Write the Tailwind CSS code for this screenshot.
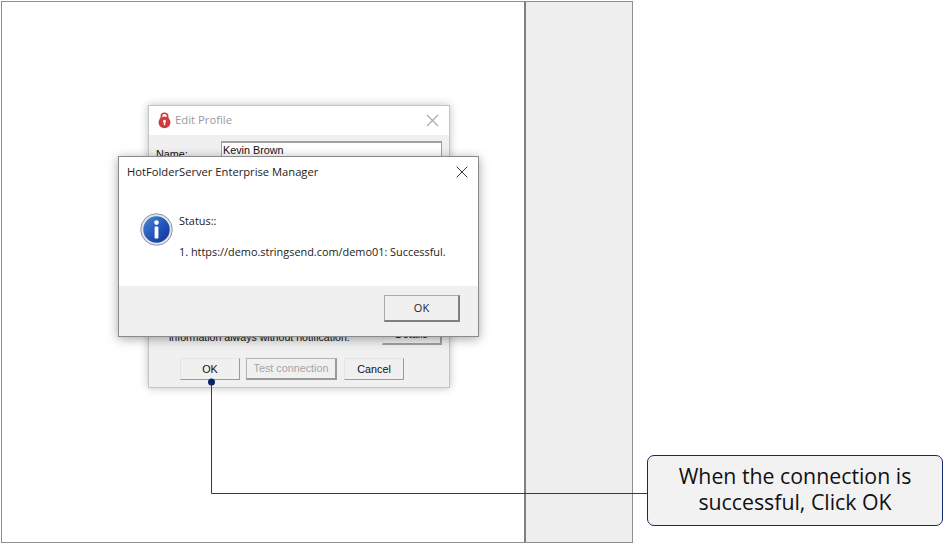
<!doctype html>
<html lang="en">
<head>
<meta charset="UTF-8" />
<title>Edit Profile</title>
<script src="https://cdn.jsdelivr.net/npm/@tailwindcss/browser@4"></script>
</head>
<body class="bg-white">
<div class="relative w-[943px] h-[543px] overflow-hidden bg-white font-['Open_Sans',sans-serif]">
    <!-- page frame with side panel -->
    <div class="absolute left-[1px] top-[1px] w-[632px] h-[542px] flex border border-[#8f8f8f]">
        <div class="w-[522px] shrink-0 bg-white"></div>
        <div class="flex-1 bg-[#eeeeee] border-l-2 border-[#808080]"></div>
    </div>

    <!-- Edit Profile dialog (behind) -->
    <div class="absolute left-[148px] top-[105px] w-[302px] h-[283px] flex flex-col border border-[#c4c4c4] shadow-[0_0_8px_rgba(0,0,0,0.25)] font-['Liberation_Sans',sans-serif] text-[10.8px] text-[#111]">
        <div class="h-[29px] shrink-0 bg-white flex items-center pl-[9px] pr-[10px]">
            <svg width="13" height="17" viewBox="0 0 14 18" class="shrink-0">
                <path d="M3.6 7V4.6a3.4 3.4 0 0 1 6.8 0V7" fill="none" stroke="#d13b3b" stroke-width="1.8" />
                <circle cx="7" cy="11" r="6.4" fill="#d13b3b" />
                <circle cx="7" cy="9.8" r="1.5" fill="#fff" />
                <rect x="6.2" y="10" width="1.6" height="4" fill="#fff" />
            </svg>
            <span class="ml-[4px] text-[11.3px] text-[#9a9a9a] font-['Open_Sans',sans-serif]">Edit Profile</span>
            <svg width="13" height="13" viewBox="0 0 13 13" class="ml-auto">
                <path d="M1 1l11 11M12 1L1 12" stroke="#a8a8a8" stroke-width="1.1" fill="none" />
            </svg>
        </div>
        <div class="flex-1 bg-[#f0f0f0] relative flex flex-col px-[7px]">
            <div class="flex items-start pt-[6px]">
                <span class="w-[65px] pt-[5px] shrink-0">Name:</span>
                <div class="flex-1 h-[22px] bg-white border border-[#a0a0a0] border-t-2 pl-[1px] leading-[15px]">Kevin Brown</div>
            </div>
            <div class="mt-auto flex items-end justify-between pl-[13px] mb-[13px]">
                <span class="text-[10.6px] leading-[14px] mb-[1px]">information always without notification.</span>
                <div class="w-[60px] h-[20px] bg-[#f0f0f0] border-b-2 border-r-2 border-[#a0a0a0] border-l border-t border-l-[#e4e4e4] border-t-[#e4e4e4] flex items-center justify-center">Details</div>
            </div>
            <div class="flex justify-start gap-[6px] pl-[24px] mb-[7px]">
                <button class="w-[60px] h-[22px] bg-[#f0f0f0] border border-[#e4e4e4] border-r-[#9a9a9a] border-b-[#9a9a9a]">OK</button>
                <button class="w-[91px] h-[22px] bg-[#f0f0f0] border border-[#b4b4b4] border-r-2 border-b-2 border-r-[#9a9a9a] border-b-[#9a9a9a] text-[#a6a6a6]">Test connection</button>
                <button class="ml-[1px] w-[60px] h-[22px] bg-[#f0f0f0] border border-[#e4e4e4] border-r-[#9a9a9a] border-b-[#9a9a9a]">Cancel</button>
            </div>
        </div>
    </div>

    <!-- message box (front) -->
    <div class="absolute left-[118px] top-[156px] w-[361px] h-[181px] flex flex-col bg-white border border-[#8a8a8a] shadow-[0_2px_10px_rgba(0,0,0,0.35)] text-[#222]">
        <div class="h-[30px] shrink-0 flex items-center pl-[8px] pr-[10px] text-[11.2px]">
            <span>HotFolderServer Enterprise Manager</span>
            <svg width="12" height="12" viewBox="0 0 12 12" class="ml-auto">
                <path d="M.7.7l10.6 10.6M11.3.7L.7 11.3" stroke="#333" stroke-width="1" fill="none" />
            </svg>
        </div>
        <div class="flex-1 flex pl-[21px] pt-[25px] text-[10.9px]">
            <svg width="33" height="33" viewBox="0 0 33 33" class="shrink-0 mt-[.5px]">
                <defs>
                    <linearGradient id="infoFill" x1="0" y1="0" x2="1" y2="1">
                        <stop offset="0" stop-color="#4f86d8" />
                        <stop offset="0.5" stop-color="#2458bb" />
                        <stop offset="1" stop-color="#12309a" />
                    </linearGradient>
                </defs>
                <circle cx="16.5" cy="16.5" r="15.8" fill="#dfe4ea" stroke="#8d96a3" stroke-width="1" />
                <circle cx="16.5" cy="16.5" r="13.2" fill="url(#infoFill)" />
                <circle cx="16.5" cy="9.6" r="2.3" fill="#fff" />
                <rect x="14.6" y="13.6" width="3.8" height="12" rx="0.8" fill="#fff" />
            </svg>
            <div class="ml-[6px] flex flex-col">
                <span class="leading-[14px] mt-[2px]">Status::</span>
                <span class="leading-[14px] mt-[17px]">1. https://demo.stringsend.com/demo01: Successful.</span>
            </div>
        </div>
        <div class="h-[50px] shrink-0 bg-[#f0f0f0] flex items-start justify-end pr-[18px] pt-[9px]">
            <button class="w-[76px] h-[27px] bg-[#f0f0f0] border border-[#a8a8a8] border-r-2 border-b-2 border-r-[#808080] border-b-[#808080] text-[11px] text-[#222]">OK</button>
        </div>
    </div>

    <!-- connector from OK button to callout -->
    <svg width="943" height="543" viewBox="0 0 943 543" class="absolute left-0 top-0 pointer-events-none">
        <path d="M211.5 382V493.5H648" fill="none" stroke="#1f3a7a" stroke-width="1" />
        <circle cx="211.5" cy="382" r="3.5" fill="#0b2466" />
    </svg>

    <!-- callout -->
    <div class="absolute left-[647px] top-[455px] w-[296px] h-[71px] pb-[3px] rounded-[7px] border border-[#14296b] bg-[#f2f2f2] flex items-center justify-center text-center text-[21.3px] leading-[26px] text-[#111]">
        <p>When the connection is<br />successful, Click OK</p>
    </div>
</div>
</body>
</html>
